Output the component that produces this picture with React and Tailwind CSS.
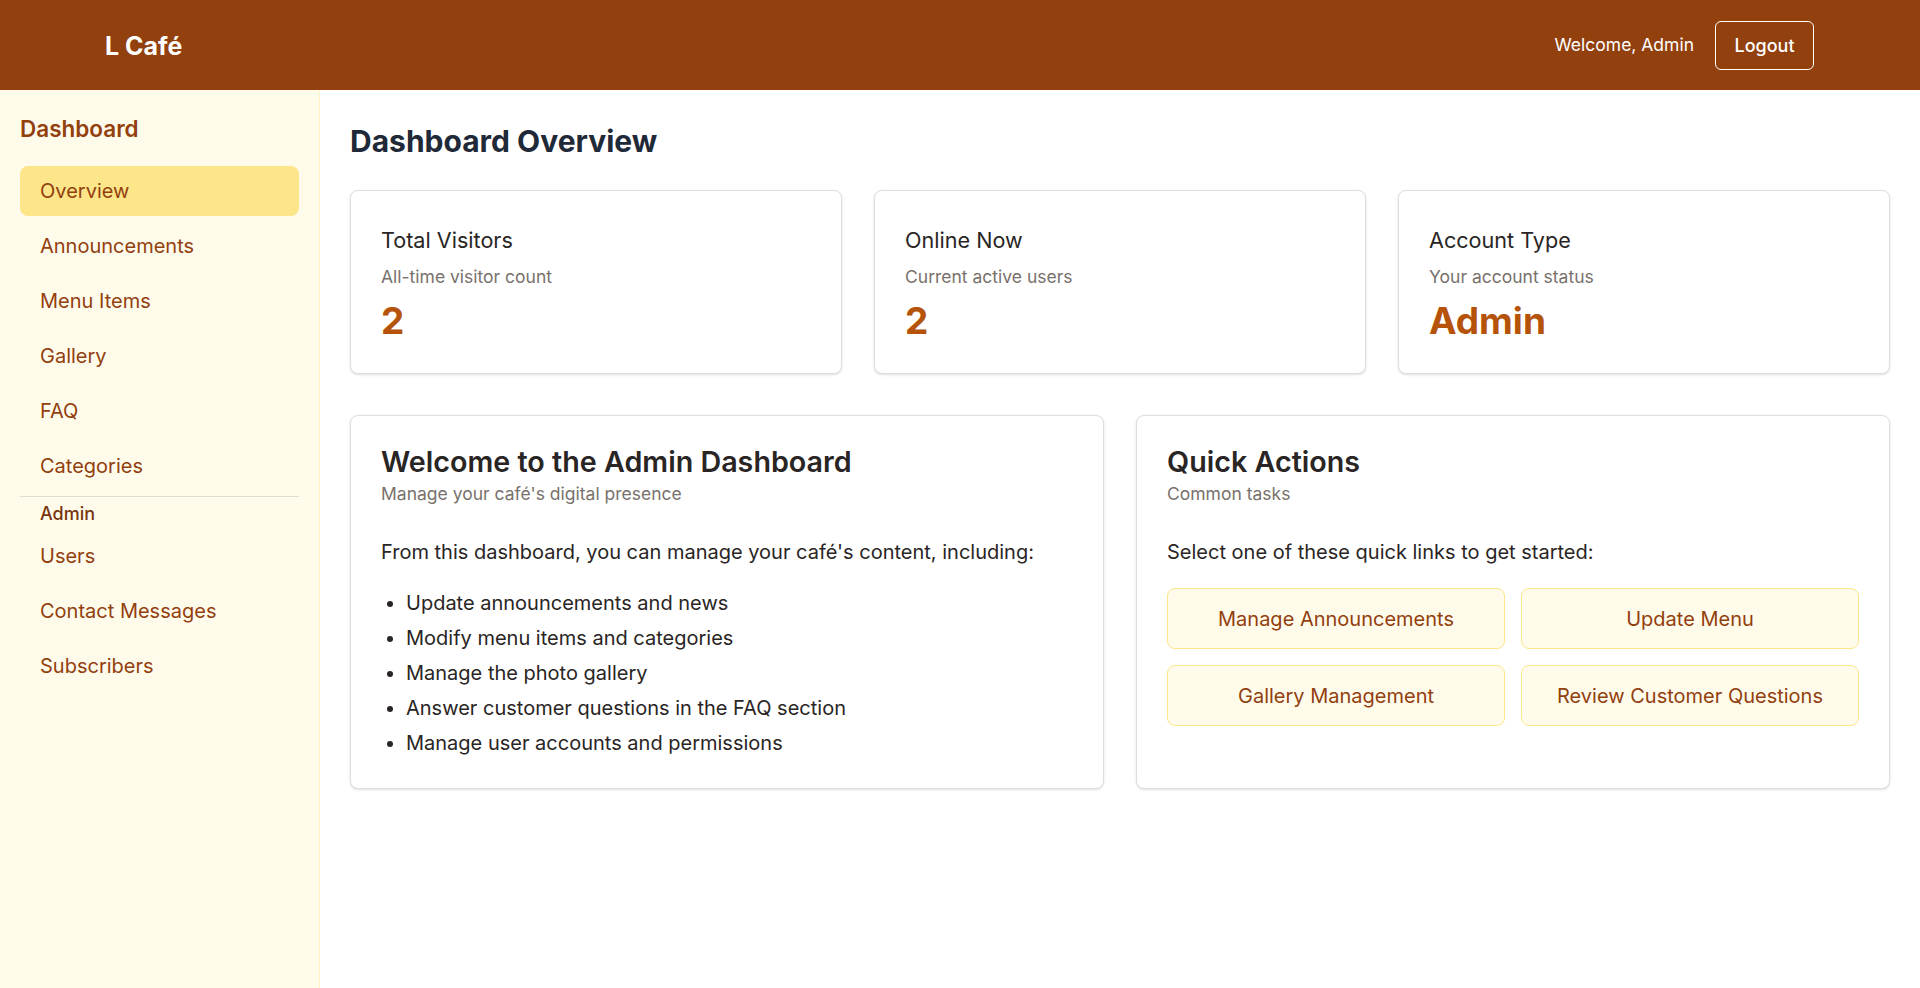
import React from "react";

const navItems = ["Overview", "Announcements", "Menu Items", "Gallery", "FAQ", "Categories"];
const adminItems = ["Users", "Contact Messages", "Subscribers"];

const stats = [
  { title: "Total Visitors", desc: "All-time visitor count", value: "2" },
  { title: "Online Now", desc: "Current active users", value: "2" },
  { title: "Account Type", desc: "Your account status", value: "Admin" },
];

const features = [
  "Update announcements and news",
  "Modify menu items and categories",
  "Manage the photo gallery",
  "Answer customer questions in the FAQ section",
  "Manage user accounts and permissions",
];

const quickLinks = ["Manage Announcements", "Update Menu", "Gallery Management", "Review Customer Questions"];

function NavItem({ label, active }) {
  return (
    <a
      href="#"
      className={`block rounded-lg px-5 py-[11px] text-[20px] leading-7 text-[#92400e] ${
        active ? "bg-[#fde68a]" : "hover:bg-[#fef3c7]"
      }`}
    >
      {label}
    </a>
  );
}

export default function App() {
  return (
    <div className="min-h-screen flex flex-col bg-white font-['Inter',_sans-serif]">
      <header className="h-[90px] bg-[#92400e] flex items-center justify-between pl-[105px] pr-[106px] shrink-0">
        <h1 className="mt-[3px] text-[25px] font-bold text-white">L Café</h1>
        <div className="flex items-center gap-[21px]">
          <span className="text-[17.5px] text-white">Welcome, Admin</span>
          <button className="h-[49px] w-[99px] rounded-md border border-white text-[18px] font-medium text-white">
            Logout
          </button>
        </div>
      </header>

      <div className="flex flex-1">
        <aside className="w-[320px] shrink-0 bg-[#fffbeb] border-r border-[#fef3c7] px-5 pt-[22px]">
          <h2 className="text-[22.5px] font-semibold text-[#92400e] mb-[20px]">Dashboard</h2>
          <nav className="flex flex-col gap-[5px]">
            {navItems.map((item, i) => (
              <NavItem key={item} label={item} active={i === 0} />
            ))}
          </nav>
          <div className="mt-[5px] border-t border-[#e0dcd3] pt-[5px]">
            <p className="px-5 text-[18px] leading-6 font-medium text-[#78350f] mb-[5px]">Admin</p>
            <nav className="flex flex-col gap-[5px]">
              {adminItems.map((item) => (
                <NavItem key={item} label={item} />
              ))}
            </nav>
          </div>
        </aside>

        <main className="flex-1 px-[30px] pt-[31px] pb-10">
          <h2 className="text-[30px] font-bold text-[#1f2937] leading-10 mb-[29px]">Dashboard Overview</h2>

          <div className="grid grid-cols-3 gap-8">
            {stats.map((s) => (
              <div key={s.title} className="h-[184px] rounded-lg border border-[#e2dcdc] bg-white px-[30px] pt-[35px] shadow-sm">
                <h3 className="text-[21.6px] font-normal leading-7 text-[#292524]">{s.title}</h3>
                <p className="mt-[10px] text-[17.5px] text-[#78716c]">{s.desc}</p>
                <p className="mt-[11px] text-[37px] font-bold leading-10 text-[#b45309]">{s.value}</p>
              </div>
            ))}
          </div>

          <div className="mt-[41px] grid grid-cols-2 gap-8">
            <div className="h-[374px] rounded-lg border border-[#e2dcdc] bg-white px-[30px] pt-[28px] shadow-sm">
              <h3 className="text-[28.7px] font-semibold leading-9 text-[#292524]">Welcome to the Admin Dashboard</h3>
              <p className="mt-[1px] text-[17.5px] text-[#78716c]">Manage your café's digital presence</p>
              <p className="mt-[30px] text-[20px] text-[#292524]">
                From this dashboard, you can manage your café's content, including:
              </p>
              <ul className="mt-[19px] list-disc pl-[25px] text-[20px] leading-[35px] text-[#292524]">
                {features.map((f) => (
                  <li key={f}>{f}</li>
                ))}
              </ul>
            </div>

            <div className="h-[374px] rounded-lg border border-[#e2dcdc] bg-white px-[30px] pt-[28px] shadow-sm">
              <h3 className="text-[28.7px] font-semibold leading-9 text-[#292524]">Quick Actions</h3>
              <p className="mt-[1px] text-[17.5px] text-[#78716c]">Common tasks</p>
              <p className="mt-[30px] text-[20px] text-[#292524]">Select one of these quick links to get started:</p>
              <div className="mt-[21px] grid grid-cols-2 gap-4">
                {quickLinks.map((q) => (
                  <button
                    key={q}
                    className="h-[61px] rounded-lg border border-[#fde68a] bg-[#fffbeb] text-[20px] text-[#92400e] hover:bg-[#fef3c7]"
                  >
                    {q}
                  </button>
                ))}
              </div>
            </div>
          </div>
        </main>
      </div>
    </div>
  );
}
